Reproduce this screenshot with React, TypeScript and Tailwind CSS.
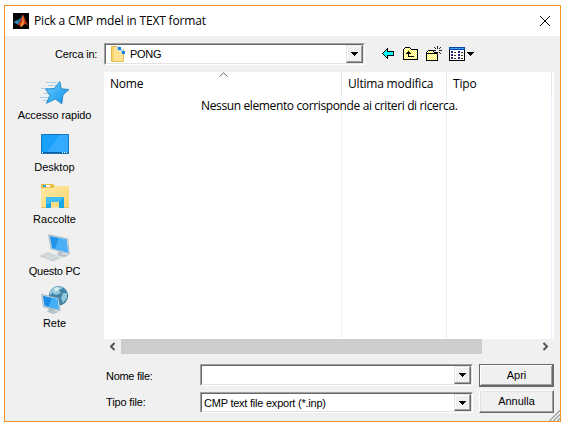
import type { ReactNode } from 'react';

const UI = "font-['Liberation_Sans',Arial,sans-serif] text-[11px] leading-[14px] whitespace-nowrap";
const SEGOE = "font-['Open_Sans','Noto_Sans',sans-serif] text-[12px] leading-[16px] whitespace-nowrap";

function Matlab() {
  return (
    <svg width="16" height="16" viewBox="0 0 16 16" className="shrink-0">
      <rect width="16" height="16" fill="#050505" />
      <path d="M0.5 9 4.5 7 7 9 4.5 11.5Z" fill="#2c8fc0" />
      <path d="M4.5 7 7.5 5 10 1.5 8 8 6 10Z" fill="#276b91" />
      <path d="M10 1.5C11.5 4 12.5 9 15.5 12.5 13 11 12 10.5 11 11.5L8 14.5C7.5 12.5 6 12 4.5 11.5 8 9.5 8 5 10 1.5Z" fill="#c73c14" />
      <path d="M10 2C9.6 6 9.5 10 7.5 12.5L8.3 14 10.5 11.5C11 8 10.5 5 10 2Z" fill="#f39a3c" />
    </svg>
  );
}

function FolderSmall() {
  return (
    <svg width="16" height="16" viewBox="0 0 16 16" className="shrink-0">
      <path d="M1.5 .5H7L8 2V3.500H13.500V15.500H1.500Z" fill="#ffe392" stroke="#e3bb52" />
      <path d="M2 1H4V15H2Z" fill="#f7d36c" />
      <path d="M7 .5H10V3H13V6H15V8H11V5H8V3H6Z" fill="#b7dcf8" />
      <path d="M8 1H11V4H8ZM12 5H15V8H12Z" fill="#1f83de" />
    </svg>
  );
}

function Star() {
  return (
    <svg width="31" height="25" viewBox="0 0 31 25">
      <defs>
        <linearGradient id="star" x2="1" y2="1">
          <stop stopColor="#6cccff" />
          <stop offset="1" stopColor="#0a92ea" />
        </linearGradient>
      </defs>
      <path d="M7 2.500H18M9 5.500H17M2 8.500H9M5 13.500H10M1 17.500H9M4 20.500H8" stroke="#a6d0ea" />
      <path d="M20.800 1.500 22.300 8.800 30 9.500 24 14.800 22.800 23.800 16.300 19 7.500 23.300 10.800 15.300 6.500 9 15.300 8.500Z" fill="url(#star)" stroke="#2585c4" strokeWidth=".9" />
    </svg>
  );
}

function Desktop() {
  return (
    <svg width="28" height="20" viewBox="0 0 28 20">
      <path d="M.5 .5H27.500V19.500H.5Z" fill="#18a0fb" stroke="#1778c2" />
      <path d="M19 1H27V18H6Z" fill="#35abff" />
      <path d="M1 18H27V19H1Z" fill="#075f9d" />
      <path d="M1 18.500H2M21 18.500H22M23 18.500H24M25 18.500H26" stroke="#fff" />
    </svg>
  );
}

function Libraries() {
  return (
    <svg width="28" height="25" viewBox="0 0 28 25">
      <defs>
        <linearGradient id="folder" x2="1" y2="1">
          <stop stopColor="#ffeaa8" />
          <stop offset="1" stopColor="#fbd671" />
        </linearGradient>
      </defs>
      <path d="M0 0H12L13.500 2H28V23.500H0Z" fill="url(#folder)" />
      <path d="M0 0H12L13.500 2 12 4H0Z" fill="#edbd45" />
      <path d="M2 1H9V3H2Z" fill="#fff" />
      <path d="M2 1H5V3H2Z" fill="#20a8e8" />
      <path d="M5 13H23V24H18V18H10V24H5Z" fill="#1ba7e8" />
      <path d="M5 13H23L18 18H10L5 21Z" fill="#42bdf5" />
      <path d="M0 23.500H5M23 23.500H28" stroke="#e9c365" />
    </svg>
  );
}

function Computer() {
  return (
    <svg width="31" height="28" viewBox="0 0 31 28">
      <path d="M19 18 23 18 24 20 30 21 25 23.500 18 21Z" fill="#bac5cb" />
      <path d="M9.500 .8 28.500 4.800 30.300 20 12 15Z" fill="#d7e5ec" stroke="#8aa6b4" strokeWidth=".7" />
      <path d="M10.800 2 27.300 5.500 29 18.500 13 14.300Z" fill="#2394ec" />
      <path d="M20 4 27.300 5.500 29 18.500 16 15Z" fill="#4bb0f8" />
      <path d="M1 22 9 18.500 22 23.500 14 27Z" fill="#e6eaec" stroke="#b2bcc2" strokeWidth=".6" />
      <path d="M4 21.500 16 26M7 20 19 24.500M4 23 11 19.500M8 24.500 15 21M12 26 19 22.500" stroke="#b3bdc3" strokeWidth=".6" />
    </svg>
  );
}

function Network() {
  return (
    <svg width="28" height="29" viewBox="0 0 28 29">
      <circle cx="17.500" cy="9.800" r="9.700" fill="#3f83a6" />
      <path d="M9 5C12 1 18 -1 22 2L18 4 20 7 15 9 11 7 9 10ZM22 7 26 7 26 12 22 17 20 12Z" fill="#93c6d8" />
      <path d="M13 2 17 1 19 3 14 6Z" fill="#d3edf2" />
      <path d="M9 21.500 13 22.500V24.500L18 26 12 28 6 25.500Z" fill="#b4c0c6" />
      <path d="M.6 8.500 17.500 12.300 19 24.800 2.500 20.800Z" fill="#dbe8ee" stroke="#85a3b2" strokeWidth=".7" />
      <path d="M1.900 9.800 16.400 13 17.700 23.400 3.500 19.900Z" fill="#1b8ee6" />
      <path d="M11 11.800 16.400 13 17.700 23.400 7.500 20.900Z" fill="#45adf6" />
    </svg>
  );
}

function ToolbarIcons() {
  return (
    <svg width="94" height="17" viewBox="0 0 94 17" shapeRendering="crispEdges">
      <defs>
        <pattern id="dither" width="2" height="2" patternUnits="userSpaceOnUse">
          <rect width="2" height="2" fill="#ffff4a" />
          <path d="M0 0H1V1H0ZM1 1H2V2H1Z" fill="#fff" />
        </pattern>
      </defs>
      <path d="M.5 8.500 5.500 3.500V6.500H11.500V10.500H5.500V13.500Z" fill="#00ffff" stroke="#000" />
      <path d="M21.500 14.500V4.500L23.500 2.500H27.500L29.500 4.500H35.500V14.500Z" fill="url(#dither)" stroke="#000" />
      <path d="M26.500 6V11.500H32M24 8.500H29M25 7.500H28" fill="none" stroke="#000" />
      <path d="M44.500 15.500V7.500L46.500 5.500H50.500L52.500 7.500H55.500V15.500Z" fill="url(#dither)" stroke="#000" />
      <path d="M44 8.500H55" stroke="#000" />
      <path d="M55.500 1V4M55.500 7V10M51 5.500H54M57 5.500H60" stroke="#222" />
      <path d="M52 2H53V3H52ZM53 3H54V4H53ZM58 2H59V3H58ZM57 3H58V4H57ZM57 7H58V8H57ZM58 8H59V9H58Z" fill="#222" />
      <path d="M67.500 2.500H82.500V15.500H67.500Z" fill="#fff" stroke="#000" />
      <path d="M67 2H83V5H67Z" fill="#064aa0" />
      <path d="M68 3H82V4H68Z" fill="#3c9cff" />
      <path d="M69 6H71V8H69ZM69 9H71V11H69ZM69 12H71V14H69ZM76 6H78V8H76ZM76 9H78V11H76ZM76 12H78V14H76Z" fill="#202080" />
      <path d="M72 7.500H74M72 10.500H74M72 13.500H74M79 7.500H81M79 10.500H81M79 13.500H81" stroke="#333" />
      <path d="M85 7H92V8H91V9H90V10H89V11H88V10H87V9H86V8H85Z" fill="#000" />
    </svg>
  );
}

function Combo({ className, children }: { className: string; children?: ReactNode }) {
  return (
    <div className={`border border-t-[#a0a0a0] border-l-[#a0a0a0] border-r-white border-b-white ${className}`}>
      <div className="flex h-full border border-t-[#696969] border-l-[#696969] border-r-[#e3e3e3] border-b-[#e3e3e3] bg-white">
        <div className="flex min-w-0 flex-1 items-center">{children}</div>
        <div className="flex w-[17px] shrink-0 items-center justify-center border border-t-[#e3e3e3] border-l-[#e3e3e3] border-r-[#696969] border-b-[#696969] bg-[#f0f0f0] shadow-[inset_-1px_-1px_#a0a0a0,inset_1px_1px_#fff]">
          <svg width="7" height="4" viewBox="0 0 7 4" shapeRendering="crispEdges">
            <path d="M0 0H7V1H6V2H5V3H4V4H3V3H2V2H1V1H0Z" />
          </svg>
        </div>
      </div>
    </div>
  );
}

function Place({ icon, label, className }: { icon: ReactNode; label: string; className: string }) {
  return (
    <div className="flex h-[52px] flex-col items-center">
      <div className="flex h-[32px] items-center">{icon}</div>
      <div className={`${UI} ${className}`}>{label}</div>
    </div>
  );
}

export default function App() {
  return (
    <div className="h-[429px] w-[568px] overflow-hidden bg-white pt-[5px] pl-1 text-black">
      <div className="flex h-[417px] w-[557px] flex-col border border-[#f7941d] bg-[#f0f0f0]">
        <header className="flex h-[30px] shrink-0 items-center bg-white pr-[9px] pl-2">
          <Matlab />
          <h1 className={`${SEGOE} ml-[5px] flex-1 tracking-[-0.17px]`}>Pick a CMP mdel in TEXT format</h1>
          <svg width="12" height="12" viewBox="0 0 12 12">
            <path d="M1 1 11 11M11 1 1 11" stroke="#000" />
          </svg>
        </header>

        <div className="flex h-[36px] shrink-0 pt-[7px]">
          <div className={`${UI} w-[99px] pt-[4px] pl-[50px] tracking-[-0.2px]`}>Cerca in:</div>
          <Combo className="h-[22px] w-[261px]">
            <div className="flex items-center gap-[4px] pl-[4px]">
              <FolderSmall />
              <span className={`${UI} tracking-[-0.3px]`}>PONG</span>
            </div>
          </Combo>
          <div className="ml-[17px] pt-[2px]">
            <ToolbarIcons />
          </div>
        </div>

        <div className="flex min-h-0 flex-1">
          <nav className="w-[99px] shrink-0 pt-[4px]">
            <Place icon={<Star />} label="Accesso rapido" className="tracking-[-0.12px]" />
            <Place icon={<Desktop />} label="Desktop" className="" />
            <Place icon={<Libraries />} label="Raccolte" className="" />
            <Place icon={<Computer />} label="Questo PC" className="tracking-[-0.25px]" />
            <Place icon={<Network />} label="Rete" className="" />
          </nav>

          <main className="w-[450px]">
            <div className="relative h-[267px] bg-white">
              <div className="grid h-full grid-cols-[238px_105px_105px]">
                {['Nome', 'Ultima modifica', 'Tipo'].map((name) => (
                  <div key={name} className="flex flex-col">
                    <div className={`${SEGOE} h-[24px] border-r border-[#e5e5e5] pt-[4px] pl-[6px] tracking-[-0.2px]`}>{name}</div>
                    <div className="flex-1 border-r border-[#e8f2fc]" />
                  </div>
                ))}
              </div>
              <svg className="absolute top-0 left-[115px]" width="9" height="5" viewBox="0 0 9 5">
                <path d="M.5 4.500 4.500 .8 8.500 4.500" fill="none" stroke="#666" />
              </svg>
              <div className={`${SEGOE} absolute top-[26px] left-[97px] tracking-[-0.37px]`}>Nessun elemento corrisponde ai criteri di ricerca.</div>
            </div>
            <div className="flex h-[15px] items-center">
              <svg width="17" height="15" viewBox="0 0 17 15">
                <path d="M10.500 4 7 7.500 10.500 11" fill="none" stroke="#555" strokeWidth="2" />
              </svg>
              <div className="h-full w-[361px] bg-[#cdcdcd]" />
              <svg className="ml-auto" width="17" height="15" viewBox="0 0 17 15">
                <path d="M6.500 4 10 7.500 6.500 11" fill="none" stroke="#555" strokeWidth="2" />
              </svg>
            </div>

            <div className="flex pt-[10px]">
              <div className="flex w-[96px] flex-col gap-[12px] pt-[5px] pl-[2px]">
                <label className={`${UI} tracking-[-0.3px]`}>Nome file:</label>
                <label className={`${UI} tracking-[-0.15px]`}>Tipo file:</label>
              </div>
              <div className="flex w-[273px] flex-col gap-[6px]">
                <Combo className="h-[22px]" />
                <Combo className="h-[21px]">
                  <span className={`${UI} pl-[2px] tracking-[-0.23px]`}>CMP text file export (*.inp)</span>
                </Combo>
              </div>
              <div className="ml-[6px] flex w-[75px] flex-col gap-[3px]">
                <button className={`${UI} h-[23px] border border-[#696969] pb-[2px] shadow-[inset_-1px_-1px_#696969,inset_1px_1px_#fff,inset_-2px_-2px_#a0a0a0]`}>Apri</button>
                <button className={`${UI} h-[23px] border border-t-white border-l-white border-r-[#696969] border-b-[#696969] pb-[2px] shadow-[inset_-1px_-1px_#a0a0a0,inset_1px_1px_#e3e3e3]`}>Annulla</button>
              </div>
            </div>
          </main>
          <div className="flex flex-1 items-end justify-end">
            <svg className="-ml-[8px] shrink-0" width="11" height="11" viewBox="0 0 11 11">
              <path d="M0 11 11 0M4 11 11 4M8 11 11 8" stroke="#a0a0a0" strokeWidth="1.800" />
              <path d="M-1 11 11 -1M3 11 11 3M7 11 11 7" stroke="#fff" strokeWidth=".8" />
            </svg>
          </div>
        </div>
      </div>
    </div>
  );
}
